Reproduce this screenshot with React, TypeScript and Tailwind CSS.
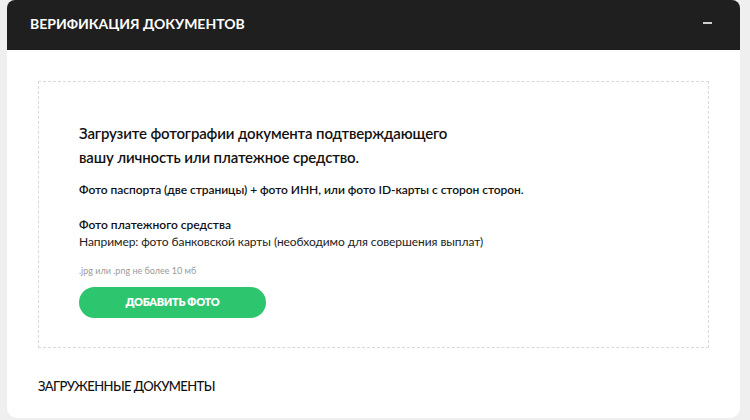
import React from "react";

export default function App() {
  return (
    <div className="w-[750px] h-[420px] bg-[#efefef] overflow-hidden pl-[7px] pr-[10px]" style={{ fontFamily: "Lato, 'Noto Sans', sans-serif" }}>
      <div className="h-[418px] bg-white rounded-t-[8px] rounded-b-[10px] flex flex-col overflow-hidden">
        <div className="h-[50px] bg-[#1f1f1f] flex items-center justify-between pl-[23px] pr-[28px] pb-[4px] shrink-0">
          <div className="text-white text-[14px] font-bold uppercase tracking-[0px]">Верификация документов</div>
          <div className="w-[9px] h-[2px] bg-[#cfcfcf]" />
        </div>
        <div className="pt-[31px] px-[31px]">
          <div className="h-[267px] border border-dashed border-[#d9d9d9] pl-[40px] pt-[39px]">
            <div className="text-[15px] font-semibold leading-[24px] text-[#111] tracking-[-0.15px]">
              Загрузите фотографии документа подтверждающего
              <br />
              вашу личность или платежное средство.
            </div>
            <div className="mt-[13px] text-[12px] font-semibold text-[#111] leading-[16px] tracking-[-0.05px]">
              Фото паспорта (две страницы) + фото ИНН, или фото ID-карты с сторон сторон.
            </div>
            <div className="mt-[18px] text-[12px] font-semibold text-[#111] leading-[17px]">Фото платежного средства</div>
            <div className="text-[12px] text-[#222] leading-[17px] tracking-[-0.07px]">
              Например: фото банковской карты (необходимо для совершения выплат)
            </div>
            <div className="mt-[15px] text-[9px] text-[#9a9a9a] leading-[12px]">.jpg или .png не более 10 мб</div>
            <button className="mt-[10px] w-[187px] h-[31px] rounded-full bg-[#2ec56f] text-white text-[11px] font-extrabold uppercase tracking-[-0.3px] flex items-center justify-center">
              Добавить фото
            </button>
          </div>
          <div className="mt-[29px] text-[13px] font-medium uppercase text-[#111] tracking-[-0.6px]">Загруженные документы</div>
        </div>
      </div>
    </div>
  );
}
